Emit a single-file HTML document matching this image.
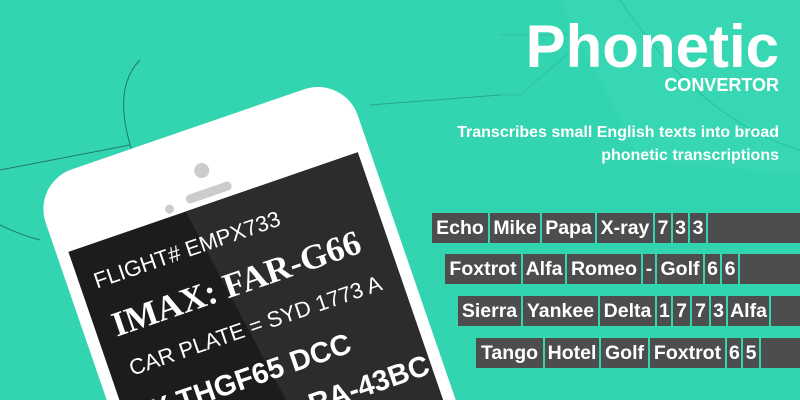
<!DOCTYPE html>
<html style="width:800px;height:400px;overflow:hidden"><head><style>
*{margin:0;padding:0;box-sizing:border-box}
body{width:800px;height:400px;overflow:hidden;background:#33d4b0;font-family:"Liberation Sans",sans-serif}
#w{position:relative;width:800px;height:400px;overflow:hidden}
.abs{position:absolute}
.t{color:#fff;font-weight:bold;white-space:nowrap;text-align:right;right:21px}
.row{position:absolute;height:30px;display:flex;gap:2px}
.row span{background:#4d4d4d;color:#fff;font-weight:bold;font-size:19.5px;line-height:30px;padding:0 2px;text-align:center;white-space:nowrap}
.row span.f{flex:1}
.phone{left:32px;top:183px;width:330px;height:345px;background:#fff;border-radius:42px 42px 0 0;transform:rotate(-19deg);transform-origin:0 0}
.screen{left:12px;top:77px;width:306px;height:268px;background:#1c1c1c;overflow:hidden}
.screen .sh{position:absolute;left:124px;top:0;width:400px;height:600px;background:#2c2c2c;transform:rotate(-9deg);transform-origin:0 0}
.st{position:absolute;color:#fff;white-space:nowrap;line-height:1}
</style></head><body><div id="w">
<svg class="abs" style="left:0;top:0" width="800" height="400">
<path d="M560 0 L640 160 L800 175 L800 0 Z" fill="#3bd9b6" opacity="0.5"/>
<path d="M620 0 Q700 120 800 150" stroke="#2bbf9c" fill="none" stroke-width="1"/>
<path d="M135 160 Q110 90 140 60" stroke="#1f7a66" fill="none" stroke-width="1"/>
<path d="M0 170 L130 145" stroke="#1f7a66" fill="none" stroke-width="1"/>
<path d="M0 225 Q20 235 40 240" stroke="#1f7a66" fill="none" stroke-width="1"/>
<path d="M370 105 L500 95" stroke="#26a88a" fill="none" stroke-width="1"/>
<path d="M500 35 L590 35 L520 95 L500 95" stroke="#2ab896" fill="none" stroke-width="1" opacity="0.6"/>
</svg>
<div class="abs phone">
 <div class="abs" style="left:157px;top:36px;width:15px;height:15px;border-radius:50%;background:#ccc"></div>
 <div class="abs" style="left:140px;top:62px;width:48px;height:9px;border-radius:5px;background:#ccc"></div>
 <div class="abs" style="left:117px;top:65px;width:9px;height:9px;border-radius:50%;background:#ccc"></div>
 <div class="abs screen">
  <div class="sh"></div>
  <div class="st" style="left:15px;top:26px;font-size:22px">FLIGHT# EMPX733</div>
  <div class="st" style="left:18px;top:67px;font-size:35px;font-family:'Liberation Serif',serif;font-weight:bold">IMAX: FAR-G66</div>
  <div class="st" style="left:20px;top:120px;font-size:22px">CAR PLATE = SYD 1773 A</div>
  <div class="st" style="left:8px;top:164px;font-size:29px;font-weight:bold">XX THGF65 DCC</div>
  <div class="st" style="left:178px;top:210px;font-size:29px;font-weight:bold">RA-43BC</div>
 </div>
</div>
<div class="abs t" style="top:12px;font-size:60px">Phonetic</div>
<div class="abs t" style="top:75px;font-size:18px">CONVERTOR</div>
<div class="abs t" style="top:121px;font-size:16px;line-height:23px">Transcribes small English texts into broad<br>phonetic transcriptions</div>
<div class="row" style="top:213px;left:432px;right:0"><span style="width:56px">Echo</span><span style="width:50px">Mike</span><span style="width:53px">Papa</span><span style="width:56px">X-ray</span><span style="width:16px">7</span><span style="width:15px">3</span><span style="width:16px">3</span><span class="f"></span></div>
<div class="row" style="top:254px;left:445px;right:0"><span style="width:76px">Foxtrot</span><span style="width:42px">Alfa</span><span style="width:74px">Romeo</span><span style="width:12px">-</span><span style="width:46px">Golf</span><span style="width:15px">6</span><span style="width:16px">6</span><span class="f"></span></div>
<div class="row" style="top:296px;left:458px;right:0"><span style="width:63px">Sierra</span><span style="width:75px">Yankee</span><span style="width:55px">Delta</span><span style="width:14px">1</span><span style="width:17px">7</span><span style="width:17px">7</span><span style="width:15px">3</span><span style="width:41px">Alfa</span><span class="f"></span></div>
<div class="row" style="top:338px;left:476px;right:0"><span style="width:67px">Tango</span><span style="width:54px">Hotel</span><span style="width:47px">Golf</span><span style="width:75px">Foxtrot</span><span style="width:14px">6</span><span style="width:16px">5</span><span class="f"></span></div>
</div></body></html>
